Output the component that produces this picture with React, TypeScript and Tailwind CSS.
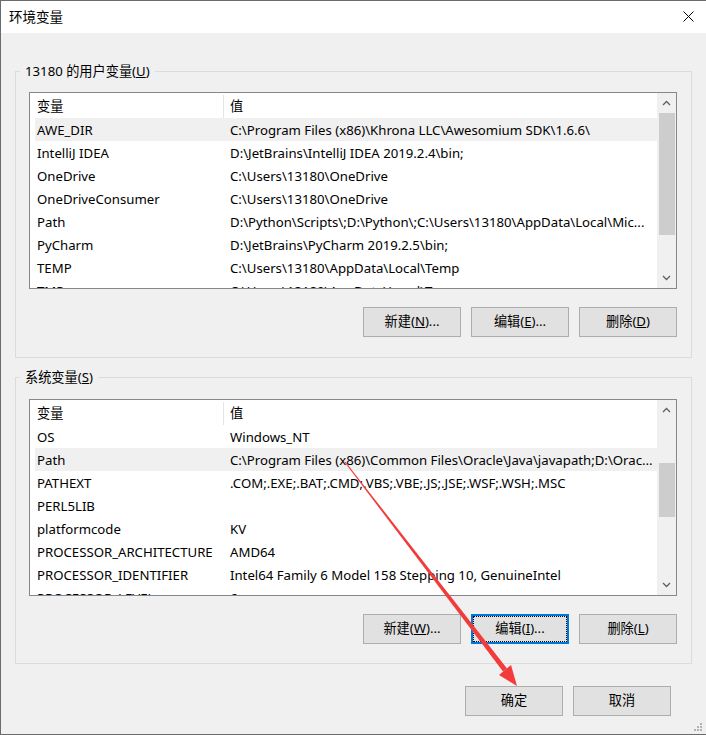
import React from 'react'

// 用户变量 / 系统变量 rows as shown in the dialog
const userVars: [string, string][] = [
  ['AWE_DIR', 'C:\\Program Files (x86)\\Khrona LLC\\Awesomium SDK\\1.6.6\\'],
  ['IntelliJ IDEA', 'D:\\JetBrains\\IntelliJ IDEA 2019.2.4\\bin;'],
  ['OneDrive', 'C:\\Users\\13180\\OneDrive'],
  ['OneDriveConsumer', 'C:\\Users\\13180\\OneDrive'],
  ['Path', 'D:\\Python\\Scripts\\;D:\\Python\\;C:\\Users\\13180\\AppData\\Local\\Mic...'],
  ['PyCharm', 'D:\\JetBrains\\PyCharm 2019.2.5\\bin;'],
  ['TEMP', 'C:\\Users\\13180\\AppData\\Local\\Temp'],
  ['TMP', 'C:\\Users\\13180\\AppData\\Local\\Temp'],
]

const sysVars: [string, string][] = [
  ['OS', 'Windows_NT'],
  ['Path', 'C:\\Program Files (x86)\\Common Files\\Oracle\\Java\\javapath;D:\\Orac...'],
  ['PATHEXT', '.COM;.EXE;.BAT;.CMD;.VBS;.VBE;.JS;.JSE;.WSF;.WSH;.MSC'],
  ['PERL5LIB', ''],
  ['platformcode', 'KV'],
  ['PROCESSOR_ARCHITECTURE', 'AMD64'],
  ['PROCESSOR_IDENTIFIER', 'Intel64 Family 6 Model 158 Stepping 10, GenuineIntel'],
  ['PROCESSOR_LEVEL', '6'],
]

function Chevron({ down }: { down?: boolean }) {
  return (
    <svg width="9" height="6" viewBox="0 0 9 6" className={down ? 'rotate-180' : ''}>
      <path d="M1 5 L4.5 1.5 L8 5" fill="none" stroke="#606060" strokeWidth="1.3" />
    </svg>
  )
}

function ScrollBar({ offset, size }: { offset: string; size: string }) {
  return (
    <div className="flex w-[19px] flex-col bg-[#f0f0f0]">
      <div className="flex h-[20px] items-center justify-center">
        <Chevron />
      </div>
      <div className={`flex-1 ${offset}`}>
        <div className={`ml-[2px] mr-[1px] bg-[#cdcdcd] ${size}`} />
      </div>
      <div className="flex h-[20px] items-center justify-center">
        <Chevron down />
      </div>
    </div>
  )
}

function VarList({ rows, selected, thumb }: { rows: [string, string][]; selected: number; thumb: [string, string] }) {
  return (
    <div className="flex h-[197px] w-[648px] border border-[#828790] bg-white">
      <div className="min-w-0 flex-1 overflow-hidden">
        <div className="flex h-[25px] items-center pt-[3px]">
          <div className="w-[193px] pl-[7px]">变量</div>
          <div className="h-[23px] w-px self-end bg-[#e5e5e5]" />
          <div className="pl-[6px]">值</div>
        </div>
        {rows.map(([name, value], i) => (
          <div
            key={name}
            className={`ml-[5px] flex h-[23px] items-center whitespace-nowrap pt-[3px] ${i === selected ? 'bg-[#f0f0f0]' : ''}`}
          >
            <div className="w-[188px] pl-[2px]">{name}</div>
            <div className="min-w-0 flex-1 truncate pl-[7px]">{value}</div>
          </div>
        ))}
      </div>
      <ScrollBar offset={thumb[0]} size={thumb[1]} />
    </div>
  )
}

function Btn({ children, focused }: { children: React.ReactNode; focused?: boolean }) {
  return (
    <button
      className={`flex h-[30px] w-[98px] items-center justify-center bg-[#e1e1e1] ${
        focused
          ? 'border-2 border-[#0078d7] outline-1 outline-offset-[-3px] outline-dotted outline-black'
          : 'border border-[#adadad]'
      }`}
    >
      {children}
    </button>
  )
}

export default function App() {
  return (
    <div className="relative flex h-[735px] w-[706px] flex-col border-b border-l border-t border-[#6b6b6b] bg-[#f0f0f0] font-['Noto_Sans','Noto_Sans_CJK_SC',sans-serif] text-[13.2px] text-black">
      {/* title bar */}
      <div className="flex h-[32px] items-center justify-between bg-white pb-[2px] pl-[8px] pr-[12px]">
        <span className="font-['Noto_Sans_CJK_SC',sans-serif] text-[13.5px]">环境变量</span>
        <svg width="11" height="11" viewBox="0 0 11 11">
          <path d="M0.5 0.5 L10.5 10.5 M10.5 0.5 L0.5 10.5" stroke="#000" strokeWidth="1" />
        </svg>
      </div>

      {/* user variables */}
      <fieldset className="ml-[14px] mt-[28px] w-[677px] border border-[#dcdcdc] p-0">
        <legend className="ml-[4px] px-[5px] leading-[20px]">
          13180 的用户变量(<u>U</u>)
        </legend>
        <div className="w-[648px] ml-[13px] pb-[20px] pt-[11px]">
          <VarList rows={userVars} selected={0} thumb={['pt-0', 'h-[122px]']} />
          <div className="mt-[18px] flex justify-end gap-[10px]">
            <Btn>新建(<u>N</u>)...</Btn>
            <Btn>编辑(<u>E</u>)...</Btn>
            <Btn>删除(<u>D</u>)</Btn>
          </div>
        </div>
      </fieldset>

      {/* system variables */}
      <fieldset className="ml-[14px] mt-[9px] w-[677px] border border-[#dcdcdc] p-0">
        <legend className="ml-[4px] px-[5px] leading-[20px]">
          系统变量(<u>S</u>)
        </legend>
        <div className="w-[648px] ml-[13px] pb-[19px] pt-[12px]">
          <VarList rows={sysVars} selected={1} thumb={['pt-[43px]', 'h-[54px]']} />
          <div className="mt-[18px] flex justify-end gap-[10px]">
            <Btn>新建(<u>W</u>)...</Btn>
            <Btn focused>编辑(<u>I</u>)...</Btn>
            <Btn>删除(<u>L</u>)</Btn>
          </div>
        </div>
      </fieldset>

      <div className="mr-[35px] mt-[22px] flex justify-end gap-[10px]">
        <Btn>确定</Btn>
        <Btn>取消</Btn>
      </div>

      {/* resize gripper */}
      <svg className="absolute bottom-[2px] right-[3px]" width="9" height="9" viewBox="0 0 9 9">
        <g fill="#b4b4b4">
          <rect x="6" y="0" width="2" height="2" />
          <rect x="3" y="3" width="2" height="2" />
          <rect x="6" y="3" width="2" height="2" />
          <rect x="0" y="6" width="2" height="2" />
          <rect x="3" y="6" width="2" height="2" />
          <rect x="6" y="6" width="2" height="2" />
        </g>
      </svg>

      {/* red annotation arrow */}
      <svg className="pointer-events-none absolute left-[-1px] top-[-1px]" width="706" height="735" viewBox="0 0 706 735">
        <polygon points="345.4,461.7 344.6,462.3 503,671.5 507,668.5" fill="#f23c3c" />
        <polygon points="511,665 517,686 499,675" fill="#f23c3c" />
      </svg>
    </div>
  )
}
